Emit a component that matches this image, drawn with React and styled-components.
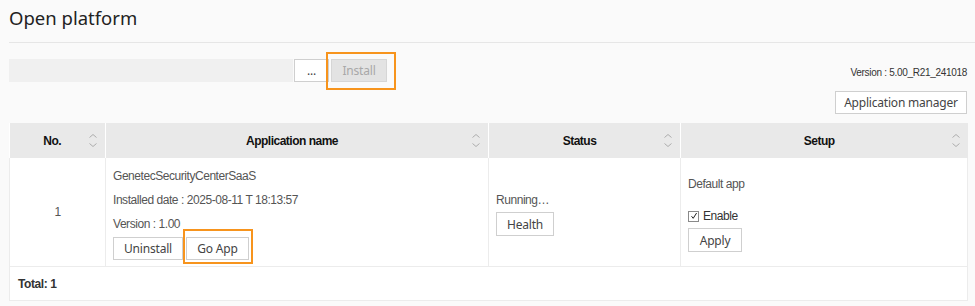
import React from 'react'
import styled, { createGlobalStyle } from 'styled-components'

const GlobalStyle = createGlobalStyle`
  body {
    margin: 0;
    background: #fafafa;
    font-family: "Liberation Sans", Arial, sans-serif;
  }
`

const Page = styled.div`
  width: 975px;
  height: 306px;
  overflow: hidden;
`

const Title = styled.h1`
  margin: 0 0 0 9px;
  height: 43px;
  box-sizing: border-box;
  padding-top: 4px;
  border-bottom: 1px solid #e6e6e6;
  font-family: "Noto Sans", sans-serif;
  font-weight: 400;
  font-size: 18.5px;
  line-height: 28px;
  color: #222;
`

const Content = styled.div`
  padding: 16px 8px 0 9px;
`

const Toolbar = styled.div`
  display: flex;
  align-items: center;
  height: 23px;
`

const FileField = styled.div`
  width: 284px;
  height: 23px;
  background: #f0f0f0;
`

const Button = styled.button`
  box-sizing: border-box;
  height: ${p => p.$h || 24}px;
  padding: 0 ${p => p.$pad ?? 9}px;
  background: ${p => (p.$disabled ? '#e3e3e3' : '#fff')};
  border: 1px solid ${p => (p.$disabled ? '#d6d6d6' : '#cfcfcf')};
  border-radius: 0;
  font-family: "Noto Sans", sans-serif;
  font-size: 12px;
  letter-spacing: -0.2px;
  color: ${p => (p.$disabled ? '#a8a8a8' : '#444')};
  cursor: pointer;
  white-space: nowrap;
`

const Highlight = styled.span`
  position: relative;
  display: inline-flex;
  &::after {
    content: '';
    position: absolute;
    top: -${p => p.$t}px;
    right: -${p => p.$r}px;
    bottom: -${p => p.$b}px;
    left: -${p => p.$l}px;
    border: 2px solid #f7941d;
    pointer-events: none;
  }
`

const Version = styled.span`
  margin-left: auto;
  margin-top: 3px;
  font-size: 10px;
  letter-spacing: -0.3px;
  color: #333;
`

const ManagerRow = styled.div`
  display: flex;
  justify-content: flex-end;
  margin-top: 9px;
`

const Table = styled.table`
  margin-top: 9px;
  width: 958px;
  border-collapse: collapse;
  table-layout: fixed;
  background: #fff;
`

const Th = styled.th`
  position: relative;
  height: 35px;
  padding: 0 20px 0 10px;
  background: #e9e9e9;
  border-left: 1px solid #fff;
  font-size: 12px;
  letter-spacing: -0.5px;
  font-weight: 700;
  color: #111;
  text-align: center;
  &:first-child {
    border-left: none;
  }
`

const SortIcon = styled.svg`
  position: absolute;
  right: 8px;
  top: 10px;
`

const Td = styled.td`
  height: 107px;
  box-sizing: border-box;
  padding: 6px 7px;
  border: 1px solid #ececec;
  border-top: none;
  vertical-align: middle;
  font-size: 12px;
  letter-spacing: -0.45px;
  color: #555;
  text-align: ${p => (p.$center ? 'center' : 'left')};
`

const Line = styled.div`
  line-height: 24px;
`

const ButtonRow = styled.div`
  display: flex;
  gap: 3px;
  margin-top: 1px;
  letter-spacing: 0;
`

const CheckRow = styled.label`
  display: flex;
  align-items: center;
  gap: 4px;
  height: 24px;
  margin-top: 8px;
  color: #333;
`

const Box = styled.span`
  display: inline-flex;
  align-items: center;
  justify-content: center;
  width: 9px;
  height: 9px;
  border: 1px solid #8a8a8a;
  background: #fff;
`

const TotalCell = styled.td`
  height: 33px;
  padding: 0 8px;
  border: 1px solid #ececec;
  font-size: 12px;
  letter-spacing: -0.4px;
  font-weight: 700;
  color: #333;
`

const Sort = () => (
  <SortIcon width="8" height="16" viewBox="0 0 8 16">
    <path d="M0.5 4.5 L4 1.5 L7.5 4.5" fill="none" stroke="#adadad" strokeWidth="1" />
    <path d="M0.5 10.5 L4 13.5 L7.5 10.5" fill="none" stroke="#adadad" strokeWidth="1" />
  </SortIcon>
)

const headers = [
  { label: 'No.', width: 96 },
  { label: 'Application name', width: 383 },
  { label: 'Status', width: 192 },
  { label: 'Setup', width: 287 },
]

export default function App() {
  return (
    <Page>
      <GlobalStyle />
      <Title>Open platform</Title>
      <Content>
        <Toolbar>
          <FileField />
          <Button $h={23} $pad={0} style={{ width: 35, marginLeft: 1 }}>...</Button>
          <Highlight $t={7} $r={9} $b={8} $l={5} style={{ marginLeft: 2 }}>
            <Button $h={23} $pad={0} $disabled style={{ width: 56 }}>Install</Button>
          </Highlight>
          <Version>Version : 5.00_R21_241018</Version>
        </Toolbar>
        <ManagerRow>
          <Button $h={23} $pad={0} style={{ width: 132 }}>Application manager</Button>
        </ManagerRow>
        <Table>
          <colgroup>
            {headers.map(h => <col key={h.label} style={{ width: h.width }} />)}
          </colgroup>
          <thead>
            <tr>
              {headers.map(h => (
                <Th key={h.label}>
                  {h.label}
                  <Sort />
                </Th>
              ))}
            </tr>
          </thead>
          <tbody>
            <tr>
              <Td $center>1</Td>
              <Td>
                <Line>GenetecSecurityCenterSaaS</Line>
                <Line>Installed date : 2025-08-11 T 18:13:57</Line>
                <Line>Version : 1.00</Line>
                <ButtonRow>
                  <Button $h={23} $pad={0} style={{ width: 70 }}>Uninstall</Button>
                  <Highlight $t={8} $r={4} $b={4} $l={3}>
                    <Button $h={23} $pad={0} style={{ width: 63 }}>Go App</Button>
                  </Highlight>
                </ButtonRow>
              </Td>
              <Td>
                <Line>Running…</Line>
                <Button $pad={0} style={{ width: 58 }}>Health</Button>
              </Td>
              <Td>
                <Line>Default app</Line>
                <CheckRow>
                  <Box>
                    <svg width="8" height="8" viewBox="0 0 8 8">
                      <path d="M1.5 4.2 L3.2 6.3 L6.6 1" fill="none" stroke="#222" strokeWidth="1" />
                    </svg>
                  </Box>
                  Enable
                </CheckRow>
                <Button $pad={0} style={{ width: 54 }}>Apply</Button>
              </Td>
            </tr>
            <tr>
              <TotalCell colSpan={4}>Total: 1</TotalCell>
            </tr>
          </tbody>
        </Table>
      </Content>
    </Page>
  )
}
